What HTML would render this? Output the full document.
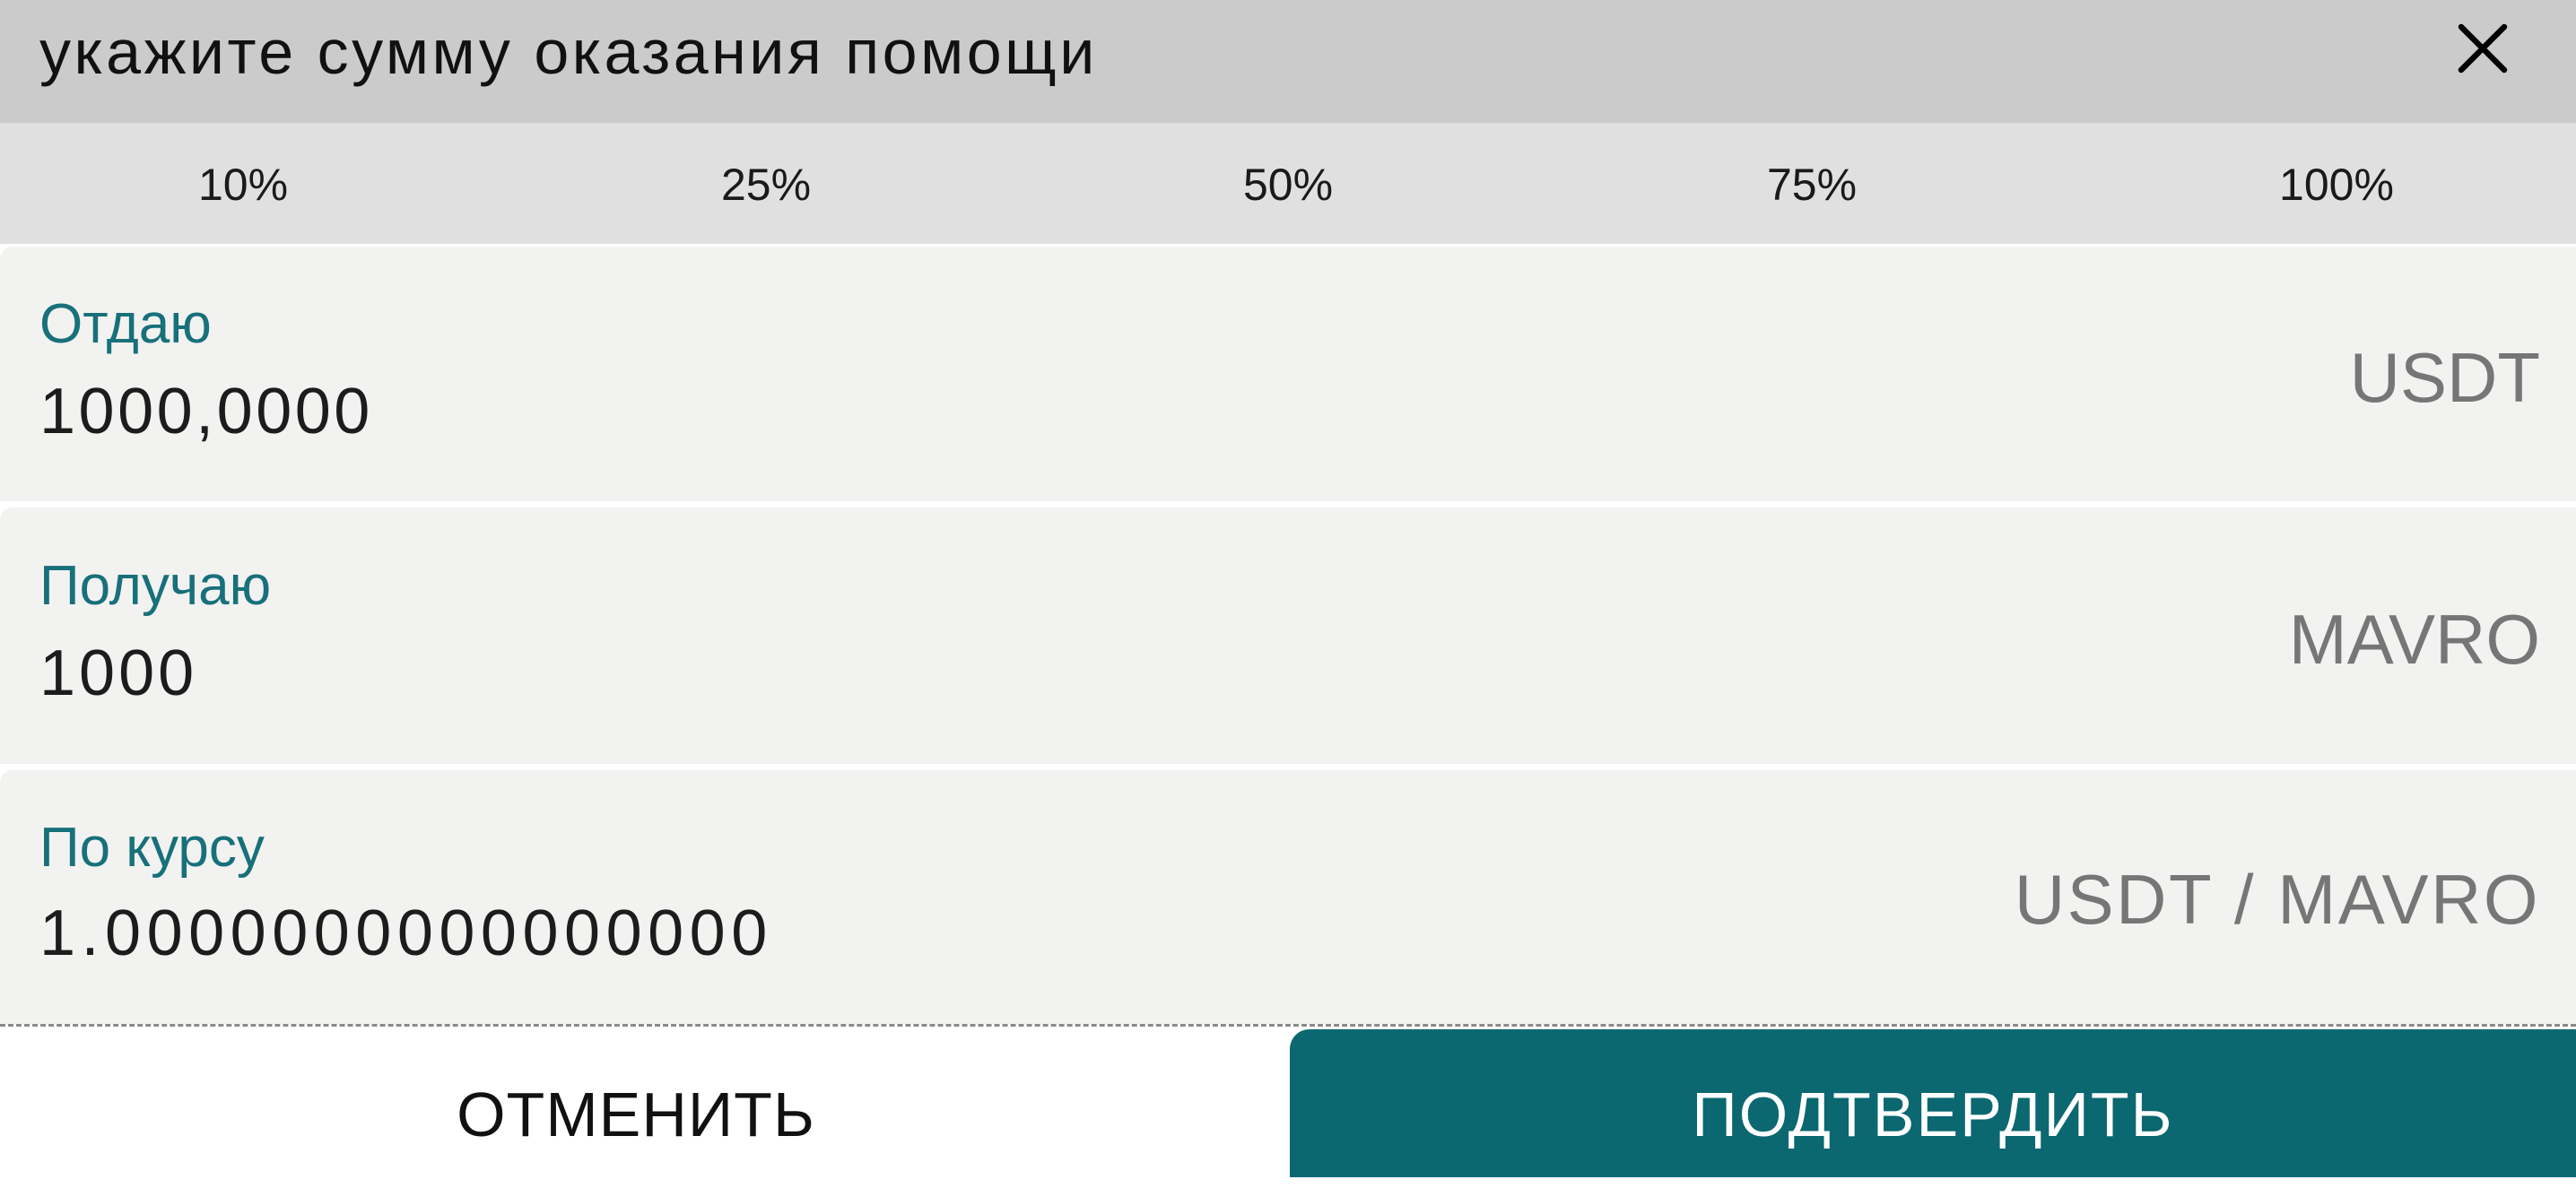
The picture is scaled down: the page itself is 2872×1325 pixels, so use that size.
<!DOCTYPE html>
<html><head><meta charset="utf-8"><style>
*{margin:0;padding:0;box-sizing:border-box}
body{width:2872px;height:1313px;overflow:hidden;background:#fff;font-family:"Liberation Sans","DejaVu Sans",sans-serif;position:relative}
.a{position:absolute;white-space:nowrap}
.hdr{left:0;top:0;width:2872px;height:137px;background:#cbcbcb}
.pct{left:0;top:137px;width:2872px;height:135px;background:#e0e0e0}
.p{top:177px;font-size:50px;color:#1a1a1a;width:300px;text-align:center}
.f{left:0;width:2872px;background:#f2f2f1;border-radius:14px 0 0 0}
.lbl{left:44px;font-size:62px;color:#17707a}
.val{left:44px;font-size:72px;color:#1c1c1c;letter-spacing:6.5px}
.unit{right:40px;font-size:78px;color:#767676;text-align:right}
</style></head><body>
<div class="a hdr"></div>
<div class="a" style="left:44px;top:18px;font-size:70px;color:#111;letter-spacing:3.5px">укажите сумму оказания помощи</div>
<svg class="a" style="left:2738px;top:24px" width="60" height="60" viewBox="0 0 60 60"><path d="M6 6L54 54M54 6L6 54" stroke="#000" stroke-width="6.5" stroke-linecap="round"/></svg>
<div class="a pct"></div>
<div class="a p" style="left:121px">10%</div>
<div class="a p" style="left:704px">25%</div>
<div class="a p" style="left:1286px">50%</div>
<div class="a p" style="left:1870px">75%</div>
<div class="a p" style="left:2455px">100%</div>

<div class="a f" style="top:275px;height:284px"></div>
<div class="a lbl" style="top:326px">Отдаю</div>
<div class="a val" style="top:418px;letter-spacing:3.5px">1000,0000</div>
<div class="a unit" style="top:376px">USDT</div>

<div class="a f" style="top:566px;height:286px"></div>
<div class="a lbl" style="top:618px">Получаю</div>
<div class="a val" style="top:710px;letter-spacing:4px">1000</div>
<div class="a unit" style="top:668px">MAVRO</div>

<div class="a f" style="top:859px;height:283px"></div>
<div class="a lbl" style="top:910px">По курсу</div>
<div class="a val" style="top:1000px">1.0000000000000000</div>
<div class="a unit" style="top:958px;letter-spacing:2.5px">USDT / MAVRO</div>

<div class="a" style="left:0;top:1142px;width:2872px;border-top:3px dashed #8a8a8a"></div>
<div class="a" style="left:0;top:1160px;width:1418px;height:165px;display:flex;align-items:center;justify-content:center;font-size:70px;color:#111;letter-spacing:1px">ОТМЕНИТЬ</div>
<div class="a" style="left:1438px;top:1148px;width:1434px;height:165px;background:#0b6770;border-radius:22px 0 0 0"></div>
<div class="a" style="left:1438px;top:1160px;width:1434px;height:165px;display:flex;align-items:center;justify-content:center;font-size:70px;color:#fff;letter-spacing:2px">ПОДТВЕРДИТЬ</div>
</body></html>
